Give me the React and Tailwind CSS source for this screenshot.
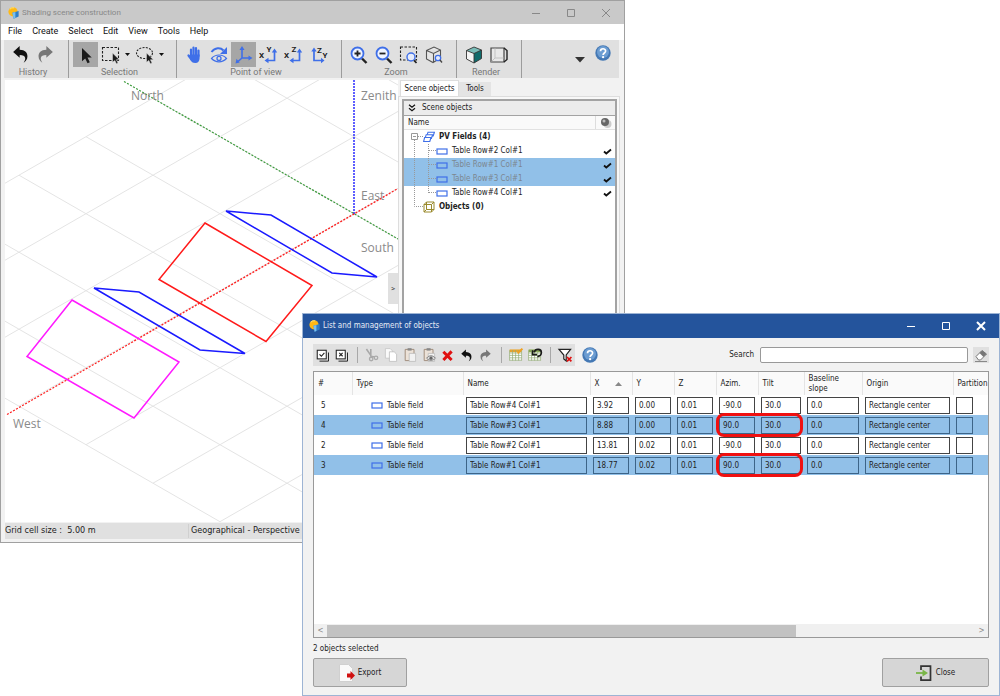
import React, { useState } from 'react';

const BLUE = '#3f6fe8';

/* ---------- small drawing helpers ---------- */

const Svg = ({ size = 20, children }) => (
  <svg width={size} height={size} viewBox="0 0 20 20" fill="none" className="shrink-0" aria-hidden="true">
    {children}
  </svg>
);

const Logo = () => (
  <svg width="12" height="12" viewBox="0 0 12 12" className="shrink-0" aria-hidden="true">
    <circle cx="5" cy="4.800" r="4.600" fill="#ffb914" />
    <path d="M1.800 2.200a4.600 4.600 0 0 1 4.400-1.400" stroke="#ffe27a" strokeWidth="1" fill="none" />
    <path d="M4.400 5.800 10.600 4v5.600L5.600 11.800z" fill="#2f7fc8" />
    <path d="M4.400 5.800 7.400 5v6l-1.800.8z" fill="#7cc0ec" />
  </svg>
);

const Undo = ({ color = '#111', size }) => (
  <Svg size={size}>
    <path d="M3 7.500 9.200 2v3.400c5.200.2 7.600 2.800 7.400 6.600-.1 2.600-1.400 4.600-3.600 5.800 1.200-1.800 1.700-3.200 1.400-4.700-.4-1.900-1.900-2.700-5.200-2.700V13z" fill={color} />
  </Svg>
);

const Redo = ({ color = '#777', size }) => (
  <Svg size={size}>
    <path d="M17 7.500 10.800 2v3.400C5.600 5.600 3.200 8.200 3.400 12c.1 2.600 1.400 4.600 3.600 5.800-1.200-1.800-1.700-3.200-1.400-4.700.4-1.900 1.900-2.700 5.200-2.700V13z" fill={color} />
  </Svg>
);

const pointer = 'M0 0v11l2.700-2.300 1.900 4 1.900-.9-1.900-3.900h3.500z';

const Cursor = () => (
  <Svg><path d={pointer} transform="translate(6 3) scale(1.200)" fill="#1b1b1b" /></Svg>
);

const BoxSelect = () => (
  <Svg>
    <rect x="1.500" y="2.500" width="16" height="13" stroke="#222" strokeWidth="1.100" strokeDasharray="2.500 1.500" />
    <path d={pointer} transform="translate(11.500 8) scale(.85)" fill="#1b1b1b" stroke="#e0e0e0" strokeWidth=".6" />
  </Svg>
);

const LassoSelect = () => (
  <Svg>
    <ellipse cx="9.500" cy="8" rx="8" ry="5.500" stroke="#222" strokeWidth="1.100" strokeDasharray="2 1.300" />
    <path d={pointer} transform="translate(11.500 8) scale(.85)" fill="#1b1b1b" stroke="#e0e0e0" strokeWidth=".6" />
  </Svg>
);

const Hand = () => (
  <Svg>
    <g stroke={BLUE} strokeWidth="2.200" strokeLinecap="round">
      <path d="M7 11V4.500M9.500 10V2.500M12 10V3.200M14.500 11V5.500M4.500 10.500l3 4" />
    </g>
    <path d="M6 9.500h9.600v3.500c0 3-1.600 5-4.300 5S7.500 17 6 14z" fill={BLUE} />
  </Svg>
);

const Orbit = () => (
  <Svg>
    <path d="M2.500 7C6 2.500 11.500 2.300 14.500 5.500" stroke={BLUE} strokeWidth="2" />
    <path d="M18 2v7h-7z" fill={BLUE} />
    <path d="M2.500 13.500c4-4.700 11-4.700 15 0-4 4.400-11 4.400-15 0z" stroke={BLUE} strokeWidth="1.200" />
    <circle cx="10" cy="13.400" r="2" stroke={BLUE} strokeWidth="1.300" />
  </Svg>
);

const Axes = () => (
  <Svg>
    <path d="M8 4v9h7M8 13l-4 3.500" stroke={BLUE} strokeWidth="1.600" />
    <path d="M8 1 5.500 5h5zM18.500 13l-4-2.500v5zM1.500 18.500l1-4.700 3.200 3.800z" fill={BLUE} />
  </Svg>
);

const AxisPair = ({ a, b, flip }) => (
  <Svg>
    {flip ? (
      <>
        <path d="M5 5v10.500h8" stroke={BLUE} strokeWidth="1.700" />
        <path d="M5 2.500 2.300 6.500h5.400zM15.500 15.500 12 12.800v5.400z" fill={BLUE} />
        <text x="8" y="8" fontSize="8" fontWeight="700" fill="#222" className="font-['Roboto',sans-serif]">{a}</text>
        <text x="13.500" y="13" fontSize="8" fontWeight="700" fill="#222" className="font-['Roboto',sans-serif]">{b}</text>
      </>
    ) : (
      <>
        <path d="M15.500 6.500v9H9" stroke={BLUE} strokeWidth="1.700" />
        <path d="M15.500 3.500 12.800 7.500h5.400zM5.500 15.500 9.500 12.800v5.400z" fill={BLUE} />
        <text x="0" y="12.500" fontSize="8" fontWeight="700" fill="#222" className="font-['Roboto',sans-serif]">{a}</text>
        <text x="7.500" y="7" fontSize="8" fontWeight="700" fill="#222" className="font-['Roboto',sans-serif]">{b}</text>
      </>
    )}
  </Svg>
);

const Magnifier = ({ plus }) => (
  <Svg>
    <path d="m13 13.500 4.500 4.500" stroke="#222" strokeWidth="2.400" />
    <circle cx="8.500" cy="8.500" r="6" fill="#eef3ff" stroke={BLUE} strokeWidth="1.800" />
    <path d={plus ? 'M5.500 8.500h6M8.500 5.500v6' : 'M5.500 8.500h6'} stroke="#222" strokeWidth="1.800" />
  </Svg>
);

const ZoomBox = () => (
  <Svg>
    <rect x="1.500" y="2" width="16" height="13" stroke="#222" strokeWidth="1.100" strokeDasharray="2.500 1.500" />
    <circle cx="12" cy="12" r="4" fill="#e6ecfb" stroke={BLUE} strokeWidth="1.400" />
    <path d="m15 15.300 2.500 2.700" stroke="#222" strokeWidth="1.700" />
  </Svg>
);

const ZoomCube = () => (
  <Svg>
    <path d="M2.500 5.500 10 2l6.500 3v8L9 17.500l-6.500-3.500zM2.500 5.500 9.500 8.500l7-3.500M9.500 8.500v9" stroke="#555" strokeWidth="1.100" fill="#e6e6e6" />
    <circle cx="14" cy="13" r="2.700" fill="#e6ecfb" stroke={BLUE} strokeWidth="1.300" />
    <path d="m16 15 2 2.500" stroke="#444" strokeWidth="1.300" />
  </Svg>
);

const SolidCube = () => (
  <Svg>
    <path d="M2.500 5.500 10 2l7.500 3L10 8.500z" fill="#79bdb8" />
    <path d="M2.500 5.500 10 8.500V18l-7.500-4z" fill="#f4f4f4" />
    <path d="M17.500 5 10 8.500V18l7.500-4.500z" fill="#0f6b6b" />
    <path d="M2.500 5.500 10 2l7.500 3v8.500L10 18l-7.500-4zM2.500 5.500 10 8.500l7.500-3.500M10 8.500V18" stroke="#333" strokeWidth=".9" />
  </Svg>
);

const WireCube = () => (
  <Svg>
    <path d="M2 3h13v14H2z" stroke="#444" strokeWidth="1.200" fill="#e8e8e8" />
    <path d="M15 3l3 2.500v9L15 17" stroke="#222" strokeWidth="1.400" />
    <path d="M6 3.500v9.500h8.500M6 13l-3.500 3.500" stroke="#c2c2c2" />
  </Svg>
);

const Help = () => (
  <svg width="16" height="16" viewBox="0 0 16 16" aria-hidden="true" className="shrink-0">
    <circle cx="8" cy="8" r="7.700" fill="#4478b4" />
    <circle cx="8" cy="7" r="6" fill="#6c9dd2" />
    <path d="M5.500 6.200C5.500 3 10.600 3 10.600 6c0 2-2.500 2-2.500 4" stroke="#fff" strokeWidth="1.700" fill="none" />
    <circle cx="8.100" cy="12.200" r="1.100" fill="#fff" />
  </svg>
);

const Field = ({ fill = '#fff' }) => (
  <svg width="12" height="7" viewBox="0 0 12 7" aria-hidden="true" className="shrink-0">
    <rect x="1" y="1" width="10" height="5" fill={fill} stroke={BLUE} strokeWidth="1.200" />
  </svg>
);

const FieldStack = () => (
  <svg width="12" height="12" viewBox="0 0 12 12" fill="#fff" stroke={BLUE} strokeWidth="1.100" aria-hidden="true" className="shrink-0">
    <path d="M5 1.200h6.400L10.200 5H3.800z" />
    <path d="M3.200 3.700h6.400L8.400 7.500H2z" />
    <path d="M1.600 6.500H8L6.800 10.500H.6z" />
  </svg>
);

const WireBox = () => (
  <svg width="12" height="12" viewBox="0 0 12 12" fill="none" stroke="#9a8a2c" aria-hidden="true" className="shrink-0">
    <path d="M1 3.500h7.500v7.500H1zM3.500 1H11v7.500H3.500zM1 3.500 3.500 1M8.500 3.500 11 1M8.500 11 11 8.500M1 11l2.500-2.500" />
  </svg>
);

const Check = () => (
  <svg width="9" height="7" viewBox="0 0 9 7" fill="none" aria-hidden="true" className="shrink-0">
    <path d="m1 3.500 2.300 2L8 1.500" stroke="#111" strokeWidth="1.800" />
  </svg>
);

const CheckAll = ({ cross }) => (
  <Svg size={15}>
    <path d="M6 17.500h12V6" stroke="#222" strokeWidth="1.300" />
    <rect x="3" y="3" width="12" height="11.500" fill="#fff" stroke="#222" strokeWidth="1.400" />
    <path d={cross ? 'm7 6.500 4.500 4.500m0-4.500L7 11' : 'm6 8.500 2.500 2.500L12.500 6.500'} stroke="#222" strokeWidth="1.500" />
  </Svg>
);

const Cut = () => (
  <Svg size={16}>
    <path d="m3 2.500 5.500 8M8.500 2.500v9l5 1" stroke="#a8a8a8" strokeWidth="2" />
    <circle cx="9" cy="15" r="2.200" stroke="#aaa" strokeWidth="1.600" />
    <circle cx="15" cy="13.500" r="2.200" stroke="#aaa" strokeWidth="1.600" />
  </Svg>
);

const Copy = () => (
  <Svg size={16}>
    <path d="M3 2h6l3 3v9H3z" fill="#fafafa" stroke="#c4c4c4" />
    <path d="M8 6h6l3 3v9H8z" fill="#fff" stroke="#bbb" />
  </Svg>
);

const Paste = ({ eye }) => (
  <Svg size={16}>
    <path d="M4 3h11v14H4z" fill="#ece2d8" stroke="#a08c7a" strokeWidth="1.200" />
    <path d="M7 1.500h5v3H7z" fill="#888" />
    <path d="M9 8h8v10H9z" fill="#f2f2f2" stroke="#bbb" />
    {eye && <path d="M7 14c3-4 8-4 11 0-3 3.500-8 3.500-11 0z" fill="#ddd" stroke="#666" />}
    {eye && <circle cx="12.500" cy="14" r="2" fill="#666" />}
  </Svg>
);

const Delete = () => (
  <Svg size={15}><path d="m4.500 5 11 11M15.500 4.500 4.500 16" stroke="#e01010" strokeWidth="4" /></Svg>
);

const Grid = ({ undo }) => (
  <Svg size={16}>
    <path d="M2 3.500h15v13H2z" fill="#fff" />
    <path d="M2 3h15v3.500H2z" fill={undo ? '#8aa855' : '#e8a32d'} />
    <path d="M2 7.500h15M2 10.500h15M2 13.500h15M2 16.500h15M2 4v13M5.700 4v13M9.500 4v13M13.300 4v13M17 4v13" stroke="#93ab74" strokeWidth=".9" />
    {undo
      ? <path d="M9 6.500c1.500-5 9-4.500 9 .5 0 3-2 4.500-5 5M7 4v5.500h5.500" stroke="#1b1b1b" strokeWidth="2" />
      : <path d="m12 8 6-6" stroke="#f0a020" strokeWidth="2.500" />}
  </Svg>
);

const ClearFilter = () => (
  <Svg size={16}>
    <path d="M2.500 3h14.500l-5.500 7v7.500L8.500 15v-5z" fill="#fff" stroke="#222" strokeWidth="1.500" />
    <path d="m12.500 12.500 5.500 5.500m0-5.500L12.500 18" stroke="#e01010" strokeWidth="2.200" />
  </Svg>
);

const Eraser = () => (
  <svg width="14" height="14" viewBox="0 0 14 14" aria-hidden="true">
    <path d="m2 8.500 6-6L12.500 6l-6 6H4.500z" fill="#fff" stroke="#777" />
    <path d="m5.500 5 2.500-2.500L12.500 6 9.500 9z" fill="#777" />
    <path d="M1 13.500h12" stroke="#888" />
  </svg>
);

/* ---------- 3D scene ---------- */

const SLOPE = 0.5746;
// one family of grid lines falls to the right, the other one rises
const falling = [-2, -1, 0, 1, 2, 3, 4, 5].map((k) => {
  const c = 10.3 + 77 * k;
  const x = (186.1 - c) / (2 * SLOPE);
  const end = k === 5 ? 220 : 460;
  return { x1: x, y1: c + SLOPE * x, x2: end, y2: c + SLOPE * end };
});
const rising = [-3, -2, -1, 0, 1, 2, 3].map((j) => {
  const c = 417.1 - 77 * j;
  const x = (c - 395.3) / (2 * SLOPE);
  return { x1: x, y1: c - SLOPE * x, x2: 460, y2: c - SLOPE * 460 };
});

const shapes = [
  { points: '226,211 271,215 377,277 332,273', stroke: '#1a1aff' },
  { points: '94,288 139,292 245,353.500 200,350', stroke: '#1a1aff' },
  { points: '205,223 312,285.500 266,341.500 159,279.500', stroke: '#ff1a1a' },
  { points: '72,300 179,362 134,418 27,356.500', stroke: '#ff1aff' },
];

const directions = [
  { name: 'North', x: 131, y: 100 },
  { name: 'Zenith', x: 361, y: 100 },
  { name: 'East', x: 361, y: 200 },
  { name: 'South', x: 361, y: 252 },
  { name: 'West', x: 13, y: 428 },
];

const Scene = () => (
  <svg className="block h-full w-full" role="img" aria-label="Shading scene">
    <g transform="translate(-5 -80)" fill="none">
      {falling.concat(rising).map((l, i) => (
        <line key={i} x1={l.x1} y1={l.y1} x2={l.x2} y2={l.y2} stroke="#e4e4e4" />
      ))}
      <path d="M124 81.500 398 239" stroke="#3a9a3a" strokeWidth="1.200" strokeDasharray="2 1.500" />
      <path d="M354 80v134" stroke="#1a1aff" strokeWidth="1.400" strokeDasharray="2 1" />
      <path d="M7 414.500 398 188.500" stroke="#ff2020" strokeWidth="1.300" strokeDasharray="2 1.500" />
      {shapes.map((s) => (
        <polygon key={s.points} points={s.points} stroke={s.stroke} strokeWidth="1.500" />
      ))}
      {directions.map((d) => (
        <text key={d.name} x={d.x} y={d.y} fill="#8a8a8a" className="font-['Open_Sans',sans-serif] text-xs">{d.name}</text>
      ))}
    </g>
  </svg>
);

/* ---------- main window ---------- */

const Tool = ({ label, active, children }) => (
  <button type="button" aria-label={label} className={`flex size-[25px] items-center justify-center ${active ? 'bg-[#a6a6a6]' : ''}`}>
    {children}
  </button>
);

const DropArrow = ({ label }) => (
  <button type="button" aria-label={label} className="flex h-[25px] w-[9px] items-center justify-center">
    <svg width="5" height="3" viewBox="0 0 5 3" aria-hidden="true"><path d="M0 0h5L2.500 3z" fill="#111" /></svg>
  </button>
);

const Group = ({ title, children }) => (
  <div className="flex shrink-0 flex-col border-r border-[#9c9c9c] pr-[10px] pl-1">
    <div className="flex pt-[2px]">{children}</div>
    <span className="text-center text-[9px] leading-[11px] text-[#777]">{title}</span>
  </div>
);

const WindowButtons = ({ color, bold }) => (
  <div className="flex items-center gap-[25px] pr-[13px]" style={{ color }}>
    <button type="button" aria-label="Minimize">
      <svg width="10" height="10" viewBox="0 0 10 10" stroke="currentColor"><path d="M1 5.500h8" /></svg>
    </button>
    <button type="button" aria-label="Maximize">
      <svg width="10" height="10" viewBox="0 0 10 10" stroke="currentColor" fill="none"><path d="M1.500 1.500h7v7h-7z" /></svg>
    </button>
    <button type="button" aria-label="Close window">
      <svg width="10" height="10" viewBox="0 0 10 10" stroke="currentColor" strokeWidth={bold ? 2 : 1}><path d="m1 1 8 8M9 1 1 9" /></svg>
    </button>
  </div>
);

const treeRows = [
  { name: 'Table Row#2 Col#1' },
  { name: 'Table Row#1 Col#1', selected: true },
  { name: 'Table Row#3 Col#1', selected: true },
  { name: 'Table Row#4 Col#1' },
];

const ObjectTree = () => (
  <div className="flex min-h-0 flex-1 flex-col border-2 border-[#a3a3a3] bg-white font-['DejaVu_Sans_Condensed',sans-serif] text-[8px] text-[#222]">
    <div className="flex h-[15px] items-center gap-[6px] border-b border-[#a3a3a3] bg-[#ececec] px-1">
      <svg width="8" height="8" viewBox="0 0 8 8" fill="none" stroke="#111" strokeWidth="1.200" aria-hidden="true"><path d="m1 .8 3 2.500L7 .8M1 4.300l3 2.500 3-2.500" /></svg>
      Scene objects
    </div>
    <div className="flex h-[14px] items-center border-b border-[#e2e2e2] bg-[#fafafa] pl-1">
      <span className="flex-1">Name</span>
      <span className="flex h-full w-5 items-center justify-center border-l border-[#ddd]">
        <svg width="12" height="12" viewBox="0 0 12 12" aria-hidden="true"><circle cx="7.500" cy="7" r="4" fill="#ccc" /><circle cx="5" cy="5" r="4" fill="#666" /><circle cx="4" cy="4" r="1.500" fill="#bbb" /></svg>
      </span>
    </div>
    <ul>
      <li>
        <div className="flex h-[14px] items-center pl-[7px] font-bold">
          <svg width="12" height="14" viewBox="0 0 12 14" fill="none" stroke="#999" aria-hidden="true"><path d="M.5 3.500h6v6h-6zM2 6.500h3" /><path d="M7 6.500h5M3.500 10v4" strokeDasharray="1 1" /></svg>
          <FieldStack />
          <span className="pl-1">PV Fields (4)</span>
        </div>
        <ul>
          {treeRows.map((row, i) => (
            <li key={row.name} className={`flex h-[14px] items-center pr-[3px] pl-[7px] ${row.selected ? 'bg-[#91c0e8] text-[#7c8790]' : ''}`}>
              <svg width="25" height="14" viewBox="0 0 25 14" stroke="#999" strokeDasharray="1 1" aria-hidden="true">
                <path d={i === 3 ? 'M3.500 0v14M17.500 0v7M18 6.500h7' : 'M3.500 0v14M17.500 0v14M18 6.500h7'} fill="none" />
              </svg>
              <Field fill={row.selected ? '#91c0e8' : '#fff'} />
              <span className="flex-1 pl-1">{row.name}</span>
              <Check />
            </li>
          ))}
        </ul>
      </li>
      <li className="flex h-[14px] items-center pl-[7px] font-bold">
        <svg width="12" height="14" viewBox="0 0 12 14" fill="none" stroke="#999" strokeDasharray="1 1" aria-hidden="true"><path d="M3.500 0v6.500H12" /></svg>
        <WireBox />
        <span className="pl-1">Objects (0)</span>
      </li>
    </ul>
  </div>
);

const SceneWindow = () => (
  <section className="absolute top-0 left-0 flex h-[78%] w-5/8 flex-col border border-[#a0a0a0] bg-[#f2f2f2]">
    <header className="flex h-[23px] shrink-0 items-center bg-[#c9c9c9] pl-[7px] text-[#888]">
      <Logo />
      <h1 className="flex-1 pl-[2px] text-[8px]">Shading scene construction</h1>
      <WindowButtons color="#888" />
    </header>
    <nav className="flex h-4 shrink-0 items-center gap-[10px] bg-white pl-[7px] text-[9px] text-[#111]">
      {['File', 'Create', 'Select', 'Edit', 'View', 'Tools', 'Help'].map((item) => (
        <button type="button" key={item}>{item}</button>
      ))}
    </nav>
    <div className="mr-[5px] ml-[3px] flex h-[38px] shrink-0 bg-[#e0e0e0]">
      <Group title="History">
        <Tool label="Undo"><Undo size={21} /></Tool>
        <Tool label="Redo"><Redo size={21} /></Tool>
      </Group>
      <Group title="Selection">
        <Tool label="Pointer" active><Cursor /></Tool>
        <Tool label="Rectangle selection"><BoxSelect /></Tool>
        <DropArrow label="Rectangle options" />
        <Tool label="Lasso selection"><LassoSelect /></Tool>
        <DropArrow label="Lasso options" />
      </Group>
      <Group title="Point of view">
        <Tool label="Pan"><Hand /></Tool>
        <Tool label="Orbit"><Orbit /></Tool>
        <Tool label="Perspective" active><Axes /></Tool>
        <Tool label="XY view"><AxisPair a="X" b="Y" /></Tool>
        <Tool label="XZ view"><AxisPair a="X" b="Z" /></Tool>
        <Tool label="ZY view"><AxisPair a="Z" b="Y" flip /></Tool>
      </Group>
      <Group title="Zoom">
        <Tool label="Zoom in"><Magnifier plus /></Tool>
        <Tool label="Zoom out"><Magnifier /></Tool>
        <Tool label="Zoom on area"><ZoomBox /></Tool>
        <Tool label="Zoom on scene"><ZoomCube /></Tool>
      </Group>
      <Group title="Render">
        <Tool label="Solid"><SolidCube /></Tool>
        <Tool label="Wireframe"><WireCube /></Tool>
      </Group>
      <div className="flex flex-1 items-start justify-end gap-[10px] pt-[5px] pr-2">
        <button type="button" aria-label="More" className="pt-[12px]">
          <svg width="10" height="6" viewBox="0 0 10 6" className="block" aria-hidden="true"><path d="M0 0h10L5 5.500z" fill="#333" /></svg>
        </button>
        <button type="button" aria-label="Help"><Help /></button>
      </div>
    </div>
    <div className="flex min-h-0 flex-1 pt-[2px]">
      <div className="relative ml-1 min-w-0 flex-1 overflow-hidden bg-white">
        <Scene />
        <button type="button" aria-label="Collapse panel" className="absolute top-[193px] right-0 h-[31px] w-[10px] bg-[#e0e0e0] text-[8px] text-[#444]">&gt;</button>
      </div>
      <aside className="flex w-[226px] shrink-0 flex-col pr-1">
        <div role="tablist" className="flex h-4 items-end pl-[2px] font-['DejaVu_Sans_Condensed',sans-serif] text-[8px] text-[#222]">
          <button type="button" role="tab" aria-selected="true" className="h-4 w-[59px] border border-b-0 border-[#ddd] bg-white">Scene objects</button>
          <button type="button" role="tab" aria-selected="false" className="h-[14px] w-8 bg-[#e4e4e4]">Tools</button>
        </div>
        <div className="flex min-h-0 flex-1 flex-col border border-[#ddd] bg-[#f8f8f8] pt-[2px] pr-[2px] pl-[3px]">
          <ObjectTree />
        </div>
      </aside>
    </div>
    <footer className="mx-1 mt-[1px] mb-[3px] flex h-4 shrink-0 items-center bg-[#e0e0e0] font-['DejaVu_Sans_Condensed',sans-serif] text-[9px] text-[#222]">
      <span className="w-[183px] whitespace-pre">Grid cell size :  5.00 m</span>
      <span className="border-l border-[#d0d0d0] pl-[2px]">Geographical - Perspective</span>
    </footer>
  </section>
);

/* ---------- object list dialog ---------- */

const initialObjects = [
  { id: 5, name: 'Table Row#4 Col#1', x: '3.92', y: '0.00', z: '0.01', azim: '-90.0', tilt: '30.0' },
  { id: 4, name: 'Table Row#3 Col#1', x: '8.88', y: '0.00', z: '0.01', azim: '90.0', tilt: '30.0', selected: true },
  { id: 2, name: 'Table Row#2 Col#1', x: '13.81', y: '0.02', z: '0.01', azim: '-90.0', tilt: '30.0' },
  { id: 3, name: 'Table Row#1 Col#1', x: '18.77', y: '0.02', z: '0.01', azim: '90.0', tilt: '30.0', selected: true },
];

const Sep = () => <span className="mr-1 ml-[6px] h-4 w-px shrink-0 bg-[#a8a8a8]" />;

const Small = ({ label, children }) => (
  <button type="button" aria-label={label} className="flex h-[22px] w-[19px] items-center justify-center">{children}</button>
);

const Cell = ({ label, value, selected, onChange, mark }) => (
  <td className="relative p-0 pr-[3px] pl-[3px]">
    <input
      aria-label={label}
      value={value}
      onChange={onChange}
      className={`block h-[17px] w-full border pl-[3px] outline-none ${selected ? 'border-[#3c6488] bg-[#91c0e8]' : 'border-[#444] bg-white'}`}
    />
    {mark && <span className="pointer-events-none absolute -top-[2px] left-0 z-10 h-6 w-[87px] rounded-lg border-[3px] border-[#f01010]" />}
  </td>
);

const Head = ({ children }) => (
  <th scope="col" className="border-r border-[#e4e4e4] p-0 pl-1 text-left font-normal whitespace-pre-line">{children}</th>
);

const ObjectTable = () => {
  const [objects, setObjects] = useState(initialObjects);
  const edit = (id, key) => (e) =>
    setObjects(objects.map((o) => (o.id === id ? { ...o, [key]: e.target.value } : o)));

  return (
    <table className="w-[712px] table-fixed border-collapse text-[8px] leading-[10px] text-[#222]">
      <colgroup>
        <col className="w-[38px]" />
        <col className="w-[111px]" />
        <col className="w-[127px]" />
        <col className="w-[42px]" />
        <col className="w-[42px]" />
        <col className="w-[42px]" />
        <col className="w-[42px]" />
        <col className="w-[46px]" />
        <col className="w-[58px]" />
        <col className="w-[91px]" />
        <col />
      </colgroup>
      <thead>
        <tr className="h-[23px] bg-[#fafafa]">
          <Head>#</Head>
          <Head>Type</Head>
          <Head>Name</Head>
          <Head>
            <span className="flex items-center justify-between pr-[10px]">
              X
              <svg width="7" height="4" viewBox="0 0 7 4" aria-hidden="true"><path d="M3.500 0 7 4H0z" fill="#888" /></svg>
            </span>
          </Head>
          <Head>Y</Head>
          <Head>Z</Head>
          <Head>Azim.</Head>
          <Head>Tilt</Head>
          <Head>{'Baseline\nslope'}</Head>
          <Head>Origin</Head>
          <Head>Partition</Head>
        </tr>
      </thead>
      <tbody>
        {objects.map((o) => (
          <tr key={o.id} className={`h-5 ${o.selected ? 'bg-[#91c0e8]' : 'bg-white'}`}>
            <td className="p-0 pt-[1px] pl-[7px]">{o.id}</td>
            <td className="p-0 pt-[1px] pl-[19px]">
              <span className="flex items-center gap-1">
                <Field fill={o.selected ? '#91c0e8' : '#fff'} />
                Table field
              </span>
            </td>
            <Cell label="Name" value={o.name} selected={o.selected} onChange={edit(o.id, 'name')} />
            <Cell label="X" value={o.x} selected={o.selected} onChange={edit(o.id, 'x')} />
            <Cell label="Y" value={o.y} selected={o.selected} onChange={edit(o.id, 'y')} />
            <Cell label="Z" value={o.z} selected={o.selected} onChange={edit(o.id, 'z')} />
            <Cell label="Azimuth" value={o.azim} selected={o.selected} onChange={edit(o.id, 'azim')} mark={o.selected} />
            <Cell label="Tilt" value={o.tilt} selected={o.selected} onChange={edit(o.id, 'tilt')} />
            <Cell label="Baseline slope" value={o.slope ?? '0.0'} selected={o.selected} onChange={edit(o.id, 'slope')} />
            <Cell label="Origin" value={o.origin ?? 'Rectangle center'} selected={o.selected} onChange={edit(o.id, 'origin')} />
            <td className="p-0 pl-[3px]">
              <input
                type="checkbox"
                aria-label="Partition"
                className={`block h-[17px] w-[17px] appearance-none border ${o.selected ? 'border-[#3c6488]' : 'border-[#444]'}`}
              />
            </td>
          </tr>
        ))}
      </tbody>
    </table>
  );
};

const ListDialog = () => (
  <section className="absolute top-[313px] right-0 bottom-0 flex w-[69.8%] flex-col border border-[#9db4d4] bg-[#f2f2f2] font-['DejaVu_Sans_Condensed',sans-serif] text-[8px] text-[#222]">
    <header className="flex h-6 shrink-0 items-center bg-[#24549c] pl-[6px] text-[#e4ebf5]">
      <Logo />
      <h2 className="flex-1 pl-[2px]">List and management of objects</h2>
      <WindowButtons color="#fff" bold />
    </header>
    <div className="flex min-h-0 flex-1 flex-col px-[10px] pt-[6px] pb-2">
      <div className="flex h-[22px] shrink-0 items-center">
        <div className="flex h-[22px] items-center bg-[#e0e0e0] pr-[1px]">
          <Small label="Check all"><CheckAll /></Small>
          <Small label="Uncheck all"><CheckAll cross /></Small>
          <Sep />
          <Small label="Cut"><Cut /></Small>
          <Small label="Copy"><Copy /></Small>
          <Small label="Paste"><Paste /></Small>
          <Small label="Paste special"><Paste eye /></Small>
          <Small label="Delete"><Delete /></Small>
          <Small label="Undo"><Undo size={15} /></Small>
          <Small label="Redo"><Redo size={15} /></Small>
          <Sep />
          <Small label="Edit columns"><Grid /></Small>
          <Small label="Reset columns"><Grid undo /></Small>
          <Sep />
          <Small label="Clear filter"><ClearFilter /></Small>
        </div>
        <button type="button" aria-label="Help" className="pl-[7px]"><Help /></button>
        <label htmlFor="search" className="ml-auto pr-[6px]">Search</label>
        <input id="search" type="text" className="h-4 w-[208px] rounded-xs border border-[#999] bg-white px-1 outline-none" />
        <button type="button" aria-label="Clear search" className="ml-[5px] flex size-4 items-center justify-center bg-[#e0e0e0]"><Eraser /></button>
      </div>
      <div className="mt-[5px] flex min-h-0 flex-1 flex-col border border-[#999] bg-white">
        <div className="min-h-0 flex-1 overflow-hidden">
          <ObjectTable />
        </div>
        <div className="flex h-[13px] shrink-0 items-center bg-[#f0f0f0] text-[#888]">
          <button type="button" aria-label="Scroll left" className="w-[13px]">&lt;</button>
          <div className="h-3 w-[69.6%] bg-[#c2c2c2]" />
          <button type="button" aria-label="Scroll right" className="ml-auto w-[13px]">&gt;</button>
        </div>
      </div>
      <p className="pt-[5px] pb-[3px] leading-[12px]">2 objects selected</p>
      <div className="flex shrink-0 justify-between">
        <button type="button" className="flex h-[29px] w-[94px] items-center justify-center gap-[3px] rounded-xs border border-[#a0a0a0] bg-[#d6d6d6]">
          <svg width="16" height="18" viewBox="0 0 16 18" aria-hidden="true">
            <path d="M.5.500h9l4 4v13H.500z" fill="#fafafa" stroke="#d0d0d0" />
            <path d="M8 9.500h3.500V7L16 11.500 11.500 16v-2.500H8z" fill="#d01010" />
          </svg>
          Export
        </button>
        <button type="button" className="flex h-[29px] w-[107px] items-center justify-center gap-1 rounded-xs border border-[#a0a0a0] bg-[#d6d6d6]">
          <svg width="16" height="16" viewBox="0 0 16 16" fill="none" aria-hidden="true">
            <path d="M5 5V1.200h9.500v14H5V11.500" stroke="#333" strokeWidth="1.700" />
            <path d="M0 8h7" stroke="#7ab648" strokeWidth="1.800" /><path d="M6.500 4.500 12 8l-5.500 3.500z" fill="#7ab648" />
          </svg>
          Close
        </button>
      </div>
    </div>
  </section>
);

const App = () => (
  <main className="relative h-screen w-full overflow-hidden bg-white font-['Roboto',sans-serif]">
    <SceneWindow />
    <ListDialog />
  </main>
);

export default App;
